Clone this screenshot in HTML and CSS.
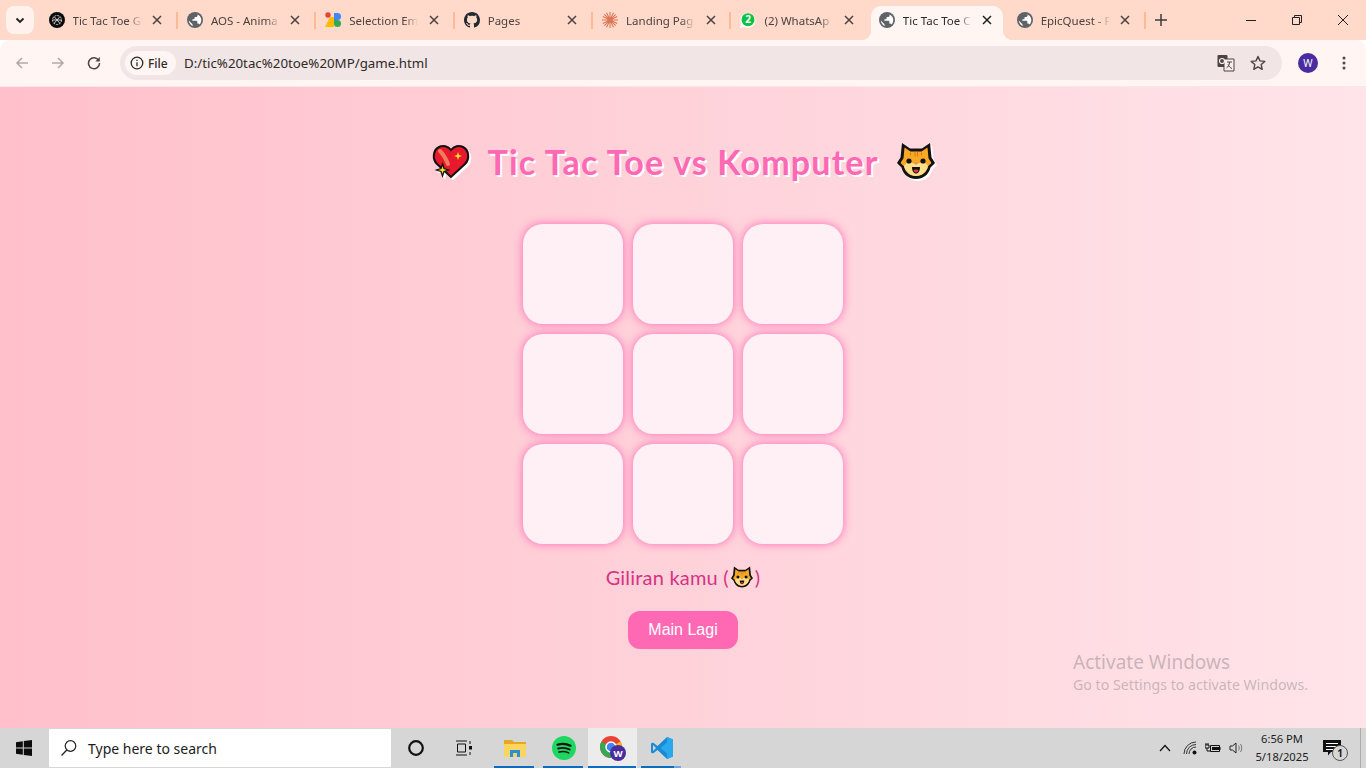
FILE: index.html
```html
<!DOCTYPE html>
<html lang="en">
<head>
    <meta charset="UTF-8">
    <meta name="viewport" content="width=device-width, initial-scale=1.0">
    <title>Tic Tac Toe vs Komputer</title>
    <link rel="stylesheet" href="styles.css">
</head>
<body>
    <svg class="defs" width="0" height="0">
        <symbol id="globe" viewBox="0 0 16 16">
            <circle cx="8" cy="8" r="8" fill="#5f6368"/>
            <path d="M7.2 14.3C4.6 14 2 11.300 1.700 8.400l3.800 3.800v.8c0 .7.700 1.300 1.700 1.300zM12.500 12.600c-.2-.6-.8-1-1.500-1h-.7V9.400c0-.4-.3-.7-.7-.7H5.400V7.200h1.500c.4 0 .7-.3.700-.7V5h1.500c.8 0 1.500-.7 1.500-1.500v-.9c2.200.9 3.700 3 3.700 5.400 0 1.800-.7 3.400-1.800 4.600z" fill="#fff"/>
        </symbol>
        <symbol id="cat" viewBox="0 0 38 38">
            <path d="M5 1 13 6.500h12L33 1l1.500 14.500L38 21l-4.500 4.500C31.500 33 26 37 19 37S6.500 33 4.500 25.500L0 21l3.500-5.500z" fill="#111"/>
            <path d="M7.500 5.500 13.500 9.500h11L30.500 5.500l1 10.800 3 4.700-3.500 3.300c-1.500 6-6 9.700-12 9.700S8.500 30 7 24.300L3.500 21l3-4.700z" fill="#f9a825"/>
            <path d="M17.500 9.500h1v5h-1zM20 9.500h1v5h-1zM13 10.500h1v3h-1zM24 10.500h1v3h-1z" fill="#d9761b"/>
            <path d="M7 24.300c1-3 4.500-4.800 7.500-3.800 2 .7 3 1.500 4.500 1.500s2.500-.8 4.500-1.500c3-1 6.500.8 7.500 3.800-1.500 6-6 9.700-12 9.700S8.500 30 7 24.300z" fill="#ffe08a"/>
            <circle cx="12" cy="19" r="2.600" fill="#111"/>
            <circle cx="26" cy="19" r="2.600" fill="#111"/>
            <path d="M16.500 20.500h5L19 23z" fill="#e98a5b"/>
            <path d="M15 25h8c0 4-1.700 6.500-4 6.500S15 29 15 25z" fill="#111"/>
            <path d="M16.500 28.500c.6-1.200 4.400-1.200 5 0-.5 1.500-1.500 2-2.500 2s-2-.5-2.500-2z" fill="#e53935"/>
        </symbol>
    </svg>

    <div class="browser">
        <div class="tabstrip">
            <button class="tab-search">
                <svg width="10" height="10" viewBox="0 0 10 10"><path d="M1.500 3.500 5 7l3.500-3.500" fill="none" stroke="#1f1f1f" stroke-width="1.800"/></svg>
            </button>
            <div class="tabs">
                <div class="tab">
                    <svg class="favicon" viewBox="0 0 16 16"><circle cx="8" cy="8" r="8" fill="#0b0b0b"/><g fill="none" stroke="#cfcfcf" stroke-width="1"><circle cx="8" cy="8" r="4.500" stroke-dasharray="2 1"/><path d="M5 4.500 11 11.500M11 4.500 5 11.500M3.500 8h9"/></g></svg>
                    <span class="tab-title">Tic Tac Toe G</span>
                    <svg class="tab-close" viewBox="0 0 10 10"><path d="M1 1l8 8M9 1 1 9"/></svg>
                </div>
                <div class="tab">
                    <svg class="favicon"><use href="#globe"/></svg>
                    <span class="tab-title">AOS - Anima</span>
                    <svg class="tab-close" viewBox="0 0 10 10"><path d="M1 1l8 8M9 1 1 9"/></svg>
                </div>
                <div class="tab">
                    <svg class="favicon" viewBox="0 0 16 16"><path d="M0 15 5 5h4v10z" fill="#fbbc04"/><path d="M9 1h3.500a3.500 3.500 0 0 1 0 7H9z" fill="#4285f4"/><path d="M9 8h3.500a3.500 3.500 0 1 1-3.500 3.500z" fill="#34a853"/><circle cx="3" cy="3" r="2.700" fill="#ea4335"/></svg>
                    <span class="tab-title">Selection Em</span>
                    <svg class="tab-close" viewBox="0 0 10 10"><path d="M1 1l8 8M9 1 1 9"/></svg>
                </div>
                <div class="tab">
                    <svg class="favicon" viewBox="0 0 16 16"><path fill="#24292f" d="M8 0C3.580 0 0 3.580 0 8c0 3.540 2.290 6.530 5.470 7.590.4.070.55-.17.55-.38 0-.19-.01-.82-.01-1.490-2.010.37-2.530-.49-2.690-.94-.09-.23-.48-.94-.82-1.130-.28-.15-.68-.52-.01-.53.63-.01 1.080.58 1.230.82.720 1.210 1.870.87 2.330.66.070-.52.28-.87.51-1.070-1.780-.2-3.640-.89-3.640-3.950 0-.87.31-1.590.82-2.150-.08-.2-.36-1.020.08-2.120 0 0 .67-.21 2.200.82.64-.18 1.320-.27 2-.27.68 0 1.360.09 2 .27 1.530-1.040 2.200-.82 2.200-.82.44 1.100.16 1.920.08 2.120.51.56.82 1.270.82 2.150 0 3.070-1.870 3.750-3.650 3.950.29.25.54.73.54 1.480 0 1.070-.01 1.930-.01 2.200 0 .21.15.46.55.38A8.013 8.013 0 0016 8c0-4.420-3.580-8-8-8z"/></svg>
                    <span class="tab-title">Pages</span>
                    <svg class="tab-close" viewBox="0 0 10 10"><path d="M1 1l8 8M9 1 1 9"/></svg>
                </div>
                <div class="tab">
                    <svg class="favicon" viewBox="0 0 16 16"><path d="M8 0v16M0 8h16M2.300 2.300l11.400 11.400M13.700 2.300 2.300 13.700M4.500 .8l7 14.400M11.500 .8l-7 14.400M.8 4.500l14.400 7M15.200 4.500l-14.400 7" stroke="#d97757" stroke-width="1.100" fill="none"/></svg>
                    <span class="tab-title">Landing Pag</span>
                    <svg class="tab-close" viewBox="0 0 10 10"><path d="M1 1l8 8M9 1 1 9"/></svg>
                </div>
                <div class="tab no-sep">
                    <svg class="favicon" viewBox="0 0 16 16"><path d="M0 16l1.200-4.300A7.500 7.500 0 1 1 4.400 15z" fill="#fff"/><circle cx="8" cy="7.700" r="6.500" fill="#0cc143"/><text class="wa-badge" x="8" y="11">2</text></svg>
                    <span class="tab-title">(2) WhatsAp</span>
                    <svg class="tab-close" viewBox="0 0 10 10"><path d="M1 1l8 8M9 1 1 9"/></svg>
                </div>
                <div class="tab active">
                    <svg class="favicon"><use href="#globe"/></svg>
                    <span class="tab-title">Tic Tac Toe C</span>
                    <svg class="tab-close" viewBox="0 0 10 10"><path d="M1 1l8 8M9 1 1 9"/></svg>
                </div>
                <div class="tab last">
                    <svg class="favicon"><use href="#globe"/></svg>
                    <span class="tab-title">EpicQuest - F</span>
                    <svg class="tab-close" viewBox="0 0 10 10"><path d="M1 1l8 8M9 1 1 9"/></svg>
                </div>
                <button class="new-tab">
                    <svg width="12" height="12" viewBox="0 0 12 12"><path d="M6 0v12M0 6h12" stroke="#3c3c3c" stroke-width="1.500"/></svg>
                </button>
            </div>
            <div class="win-controls">
                <svg width="46" height="12" viewBox="0 0 46 12"><path d="M18 6.500h10" stroke="#222"/></svg>
                <svg width="46" height="12" viewBox="0 0 46 12"><path d="M18.500 3.500h7v7h-7zM20.500 3.500v-2h7v7h-2" fill="none" stroke="#222"/></svg>
                <svg width="46" height="12" viewBox="0 0 46 12"><path d="M18 1l10 10M28 1 18 11" stroke="#222" fill="none"/></svg>
            </div>
        </div>

        <div class="toolbar">
            <svg class="nav-icon" viewBox="0 0 14 14"><path d="M13 7H2M7 2 2 7l5 5" fill="none" stroke="#b3aaa8" stroke-width="1.600"/></svg>
            <svg class="nav-icon" viewBox="0 0 14 14"><path d="M1 7h11M7 2l5 5-5 5" fill="none" stroke="#b3aaa8" stroke-width="1.600"/></svg>
            <svg class="nav-icon" viewBox="0 0 14 14"><path d="M11.800 4.500A5.500 5.500 0 1 0 12.500 7" fill="none" stroke="#4e4341" stroke-width="1.500"/><path d="M12.800 1v4.400H8.400z" fill="#4e4341"/></svg>
            <div class="omnibox">
                <div class="chip">
                    <svg width="14" height="14" viewBox="0 0 14 14"><circle cx="7" cy="7" r="5.800" fill="none" stroke="#2f2927" stroke-width="1.300"/><path d="M7 6.200v4M7 3.700v1.300" stroke="#2f2927" stroke-width="1.300"/></svg>
                    <span>File</span>
                </div>
                <span class="url">D:/tic%20tac%20toe%20MP/game.html</span>
                <div class="omni-actions">
                    <svg width="18" height="18" viewBox="0 0 18 18"><rect x="0.500" y="1" width="10" height="12" rx="1" fill="#4e4341"/><path d="M7 5h10v12H7z" fill="#f6efed" stroke="#4e4341"/><circle cx="5" cy="7" r="2.500" fill="none" stroke="#f6efed" stroke-width="1.200"/><path d="M10 8h5M12.500 8c0 3-1.500 5-3 6M11 10.500c1 2 2 3 4 4" stroke="#4e4341" fill="none"/></svg>
                    <svg width="16" height="16" viewBox="0 0 16 16"><path d="M8 1.500l2 4.400 4.800.5-3.600 3.200 1 4.700L8 11.900l-4.200 2.400 1-4.700L1.200 6.400 6 5.900z" fill="none" stroke="#4e4341" stroke-width="1.400" stroke-linejoin="round"/></svg>
                </div>
            </div>
            <div class="avatar">W</div>
            <svg class="menu-dots" width="4" height="14" viewBox="0 0 4 14"><circle cx="2" cy="2" r="1.500" fill="#4e4341"/><circle cx="2" cy="7" r="1.500" fill="#4e4341"/><circle cx="2" cy="12" r="1.500" fill="#4e4341"/></svg>
        </div>

        <main class="page">
            <h1 class="game-title">
                <svg class="title-emoji" viewBox="0 0 38 34">
                    <path d="M19 33 5 20C0 15 1 6 7 3c4-2 9-1 12 3 3-4 8-5 12-3 6 3 7 12 2 17z" fill="#e8192c" stroke="#111" stroke-width="2"/>
                    <path d="M8 7c2 2 6 8 8 13" stroke="#f47c5c" stroke-width="4" stroke-linecap="round" fill="none"/>
                    <path d="M10.500 20l1.500 4.500 4.500 1.500-4.500 1.500-1.500 4.500L9 27.500 4.500 26 9 24.500z" fill="#fde030" stroke="#111" stroke-width="1.300"/>
                    <path d="M26 8l1 3 3 1-3 1-1 3-1-3-3-1 3-1z" fill="#fde030"/>
                </svg>
                <span>Tic Tac Toe vs Komputer</span>
                <svg class="title-emoji cat-emoji"><use href="#cat"/></svg>
            </h1>
            <div class="board">
                <div class="cell"></div>
                <div class="cell"></div>
                <div class="cell"></div>
                <div class="cell"></div>
                <div class="cell"></div>
                <div class="cell"></div>
                <div class="cell"></div>
                <div class="cell"></div>
                <div class="cell"></div>
            </div>
            <p class="status">Giliran kamu (<svg class="status-emoji"><use href="#cat"/></svg>)</p>
            <button class="restart">Main Lagi</button>
            <div class="activate">
                <div class="activate-head">Activate Windows</div>
                <div>Go to Settings to activate Windows.</div>
            </div>
        </main>

        <footer class="taskbar">
            <svg class="start" width="16" height="16" viewBox="0 0 16 16"><path d="M0 2.200 6.800 1.200v6.400H0zM7.800 1.100 16 0v7.600H7.800zM0 8.500h6.800v6.300L0 13.800zM7.800 8.500H16V16l-8.200-1.100z" fill="#0c0c0c"/></svg>
            <div class="search">
                <svg width="18" height="18" viewBox="0 0 18 18"><circle cx="10.500" cy="7" r="5.300" fill="none" stroke="#222" stroke-width="1.200"/><path d="M6.800 11 1.500 16.500" stroke="#222" stroke-width="1.300"/></svg>
                <span>Type here to search</span>
            </div>
            <div class="task-icons">
                <div class="task-btn plain"><svg width="18" height="18" viewBox="0 0 18 18"><circle cx="9" cy="9" r="6.800" fill="none" stroke="#111" stroke-width="2.200"/></svg></div>
                <div class="task-btn plain"><svg width="18" height="16" viewBox="0 0 18 16"><path d="M1 1h11M1 15h11M2.500 4h8v8h-8z" fill="none" stroke="#111"/><path d="M15 1v3M15 12v3" stroke="#111"/><rect x="14" y="6" width="3" height="3.500" fill="#111"/></svg></div>
                <div class="task-btn open first-open"><svg width="22" height="20" viewBox="0 0 22 20"><path d="M0 2h8l2 2h12v14H0z" fill="#e5a825"/><path d="M0 6h22v13H0z" fill="#fcd55f"/><path d="M6 19v-7h10v7h-3v-4H9v4z" fill="#2a8fd6"/></svg></div>
                <div class="task-btn open"><svg width="24" height="24" viewBox="0 0 24 24"><circle cx="12" cy="12" r="12" fill="#1ed760"/><g fill="none" stroke="#111" stroke-linecap="round"><path d="M5.500 8.700c4.500-1.300 9-1 13 1" stroke-width="2.200"/><path d="M6.200 12.500c4-1.100 8-.8 11.500 1" stroke-width="1.900"/><path d="M7 16c3.400-.9 6.700-.6 9.700 .9" stroke-width="1.500"/></g></svg></div>
                <div class="task-btn open current">
                    <svg width="26" height="26" viewBox="0 0 26 26">
                        <circle cx="11" cy="12" r="11" fill="#ea4335"/>
                        <path d="M11 12 20.500 6.500A11 11 0 0 1 11 23z" fill="#fbbc04"/>
                        <path d="M11 12 1.500 6.500A11 11 0 0 0 11 23l5-9z" fill="#34a853"/>
                        <circle cx="11" cy="12" r="5" fill="#4285f4" stroke="#fff" stroke-width="1.500"/>
                        <circle cx="18" cy="18" r="8" fill="#4a2ca0"/>
                        <text class="chrome-badge" x="18" y="21.500">W</text>
                    </svg>
                </div>
                <div class="task-btn open stacked"><svg width="24" height="24" viewBox="0 0 24 24"><path d="M17 1 7.500 10 3 6.500 1 7.500v9l2 1 4.500-3.500L17 23l6-2.500v-17z" fill="#1a8ad4"/><path d="M17 1l6 2.500v17L17 23V6.500L10.500 12 17 17.500z" fill="#2aa8ee"/><path d="M3 9l3 3-3 3z" fill="#d6d6d6"/></svg></div>
            </div>
            <div class="tray">
                <svg class="tray-chevron" width="12" height="8" viewBox="0 0 12 8"><path d="M1 7l5-5.500L11 7" fill="none" stroke="#111" stroke-width="1.200"/></svg>
                <svg width="14" height="14" viewBox="0 0 14 14"><g fill="none" stroke="#333"><path d="M1 13A12 12 0 0 1 13 1"/><path d="M3.500 13A9.500 9.500 0 0 1 13 3.500"/><path d="M6 13A7 7 0 0 1 13 6"/></g><circle cx="11.500" cy="11.500" r="2" fill="#111"/></svg>
                <svg width="16" height="12" viewBox="0 0 16 12"><path d="M5.500 3.500h9v6h-9z" fill="none" stroke="#111"/><rect x="7" y="5" width="7" height="3" fill="#111"/><path d="M15 5v3" stroke="#111"/><path d="M0 3h4v3H0zM1 1v2M3 1v2M2 6v3h3.500" stroke="#111" fill="none"/></svg>
                <svg width="16" height="14" viewBox="0 0 16 14"><path d="M1 5h2.500L7 2v10L3.500 9H1z" fill="none" stroke="#222"/><path d="M9.500 4.500c1 1.500 1 3.500 0 5M11.500 3c1.700 2.500 1.700 5.500 0 8" fill="none" stroke="#777"/></svg>
            </div>
            <div class="clock">
                <div>6:56 PM</div>
                <div>5/18/2025</div>
            </div>
            <div class="notify">
                <svg width="18" height="16" viewBox="0 0 18 16"><path d="M0 0h18v12H8l-3 3.500V12H0z" fill="#111"/><path d="M3 3.500h12M3 6.500h12M3 9.500h8" stroke="#fff"/></svg>
                <span class="notify-count">1</span>
            </div>
            <div class="show-desktop"></div>
        </footer>
    </div>
</body>
</html>
```

FILE: styles.css
```css
* {
    box-sizing: border-box;
}
body {
    margin: 0;
    overflow: hidden;
    font-family: "Noto Sans", "Open Sans", sans-serif;
}
button {
    border: none;
    background: none;
    padding: 0;
    font: inherit;
}
.defs {
    position: absolute;
}
.browser {
    display: flex;
    flex-direction: column;
    height: 100vh;
}

/* tab strip */
.tabstrip {
    display: flex;
    height: 40px;
    background-color: #ffd9c9;
}
.tab-search {
    display: flex;
    align-items: center;
    justify-content: center;
    width: 28px;
    height: 28px;
    margin: 6px 0 0 6px;
    border-radius: 8px;
    background-color: #fff2ec;
}
.tabs {
    display: flex;
    flex: 1;
    margin-left: 5.500px;
    padding-top: 6px;
}
.tab {
    position: relative;
    display: flex;
    align-items: center;
    flex: none;
    width: 138.400px;
    height: 34px;
    padding: 0 0 6px 9px;
    color: #4c4240;
    font-size: 11.500px;
}
.tab::after {
    content: "";
    position: absolute;
    right: 0;
    top: 6px;
    width: 2px;
    height: 17px;
    background-color: #ffb995;
}
.tab.no-sep::after {
    display: none;
}
.favicon {
    flex: none;
    width: 16px;
    height: 16px;
    margin-right: 8px;
}
.tab-title {
    flex: none;
    width: 69px;
    overflow: hidden;
    white-space: nowrap;
    -webkit-mask-image: linear-gradient(to right, #000 80%, transparent);
    mask-image: linear-gradient(to right, #000 80%, transparent);
}
.tab-close {
    flex: none;
    width: 10px;
    height: 10px;
    margin-left: 10.500px;
    fill: none;
    stroke: #4c4240;
    stroke-width: 1.500;
}
.tab.active {
    z-index: 1;
    width: 132px;
    height: 34px;
    margin: 0 4.800px 0 1px;
    padding-left: 8px;
    border-radius: 10px 10px 0 0;
    background-color: #fff6f3;
    color: #2f2927;
}
.tab.active .tab-close {
    margin-left: 10px;
    stroke: #1f1f1f;
}
/* curved feet either side of the open tab */
.tab.active::before,
.tab.active::after {
    content: "";
    display: block;
    position: absolute;
    top: auto;
    bottom: 0;
    width: 10px;
    height: 10px;
}
.tab.active::before {
    left: -10px;
    background: radial-gradient(circle at 0 0, transparent 10px, #fff6f3 10.500px);
}
.tab.active::after {
    right: -10px;
    background: radial-gradient(circle at 100% 0, transparent 10px, #fff6f3 10.500px);
}
.wa-badge,
.chrome-badge {
    fill: #fff;
    font-size: 10px;
    font-weight: 700;
    text-anchor: middle;
}
.chrome-badge {
    font-size: 9.500px;
}
.new-tab {
    display: flex;
    align-items: center;
    margin: -6px 0 0 9px;
}
.win-controls {
    display: flex;
    align-items: center;
    height: 40px;
}

/* address bar */
.toolbar {
    display: flex;
    align-items: center;
    height: 46px;
    padding: 0 14px 0 15px;
    border-radius: 10px 10px 0 0;
    background-color: #fff6f3;
}
.nav-icon {
    flex: none;
    width: 14px;
    height: 14px;
    margin-right: 22px;
}
.omnibox {
    display: flex;
    align-items: center;
    flex: 1;
    height: 34px;
    margin: 0 16px 0 -3px;
    padding: 0 16px 0 5px;
    border-radius: 17px;
    background-color: #f1e6e5;
}
.chip {
    display: flex;
    align-items: center;
    gap: 4px;
    width: 51px;
    height: 24px;
    padding: 0 0 0 5px;
    border-radius: 12px;
    background-color: #fff6f3;
    color: #2f2927;
    font-size: 12px;
    font-weight: 500;
}
.url {
    flex: 1;
    margin-left: 8px;
    color: #2f2927;
    font-size: 13.300px;
}
.omni-actions {
    display: flex;
    align-items: center;
    gap: 15px;
}
.avatar {
    flex: none;
    width: 20px;
    height: 20px;
    border-radius: 50%;
    background-color: #4a2ca0;
    color: #fff;
    font-size: 10px;
    line-height: 20px;
    text-align: center;
}
.menu-dots {
    flex: none;
    margin-left: 24px;
    margin-right: 6px;
}

/* game */
.page {
    position: relative;
    display: flex;
    flex-direction: column;
    align-items: center;
    flex: 1;
    padding-top: 56px;
    border-top: 1px solid #ffe4e6;
    background: linear-gradient(to right, #ffc0cb, #ffe4e9);
}
.game-title {
    display: flex;
    align-items: center;
    gap: 18px;
    height: 40px;
    margin: -2px 0 43px;
    color: #ff69b4;
    font-family: "Lato", sans-serif;
    font-size: 34px;
    font-weight: 700;
    letter-spacing: 1.170px;
    text-shadow: 2px 2px 0 #fff;
    white-space: nowrap;
}
.title-emoji {
    flex: none;
    width: 38px;
    height: 36px;
    filter: drop-shadow(2px 2px 0 #fff);
}
.cat-emoji {
    height: 38px;
}
.board {
    display: grid;
    grid-template-columns: repeat(3, 100px);
    grid-auto-rows: 100px;
    gap: 10px;
}
.cell {
    border-radius: 20px;
    background-color: #fff0f5;
    box-shadow: 0 0 10px #ff69b4;
}
.status {
    display: flex;
    align-items: center;
    height: 24px;
    margin: 21px 0 0;
    color: #d63384;
    font-family: "Lato", sans-serif;
    font-size: 20px;
    letter-spacing: 0.200px;
}
.status-emoji {
    width: 22px;
    height: 22px;
    margin: 0 2px;
}
.restart {
    width: 110px;
    height: 38px;
    margin-top: 22px;
    border-radius: 12px;
    background-color: #ff69b4;
    color: #fff;
    font-family: "Liberation Sans", Arial, sans-serif;
    font-size: 16px;
}
.activate {
    position: absolute;
    left: 1073px;
    top: 562px;
    color: rgba(100, 100, 100, 0.36);
    font-size: 14.200px;
    line-height: 20px;
}
.activate-head {
    font-size: 19px;
    line-height: 26px;
}

/* taskbar */
.taskbar {
    display: flex;
    align-items: center;
    height: 40px;
    background-color: #d6d6d6;
    color: #1c1c1c;
}
.start {
    flex: none;
    margin: 0 17px 0 16px;
}
.search {
    display: flex;
    align-items: center;
    gap: 10px;
    width: 342px;
    height: 38px;
    padding-left: 11px;
    background-color: #fff;
    font-size: 14px;
}
.task-icons {
    display: flex;
    align-items: center;
    height: 40px;
    margin-left: 1px;
}
.task-btn {
    position: relative;
    display: flex;
    align-items: center;
    justify-content: center;
    width: 49px;
    height: 40px;
}
.task-btn.plain {
    width: 48px;
}
.task-btn.first-open {
    margin-left: 2px;
}
.task-btn.open::after {
    content: "";
    position: absolute;
    left: 4px;
    right: 5px;
    bottom: 0;
    height: 2px;
    background-color: #0a6cc4;
}
.task-btn.stacked::after {
    background: linear-gradient(to right, #0a6cc4 82%, #6fa8dc 82%);
}
.task-btn.current {
    background-color: #ececec;
}
.task-btn.current::after {
    left: 0;
    right: 1px;
}
.tray {
    display: flex;
    align-items: center;
    gap: 8px;
    margin-left: auto;
}
.tray-chevron {
    margin-right: 4px;
}
.clock {
    width: 72px;
    margin-left: 1px;
    font-size: 11.200px;
    line-height: 18px;
    text-align: center;
}
.notify {
    position: relative;
    display: flex;
    width: 34px;
    margin-left: 5px;
}
.notify-count {
    position: absolute;
    left: 9px;
    top: 5px;
    width: 16px;
    height: 16px;
    border: 1px solid #555;
    border-radius: 50%;
    background-color: #d6d6d6;
    font-size: 10px;
    font-weight: 700;
    line-height: 14px;
    text-align: center;
}
.show-desktop {
    width: 1px;
    height: 40px;
    margin: 0 5px 0 3px;
    background-color: #aaa;
}
```
